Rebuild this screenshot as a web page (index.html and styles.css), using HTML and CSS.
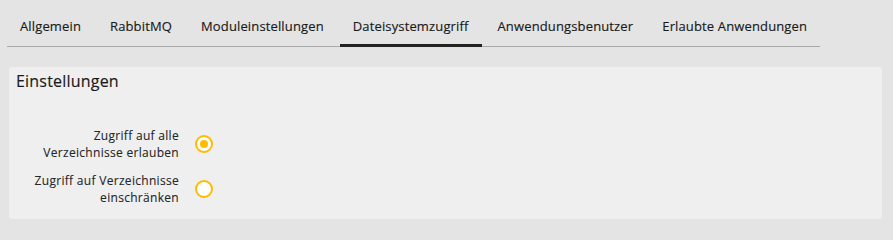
FILE: index.html
```html
<!DOCTYPE html>
<html lang="de">
<head>
<meta charset="utf-8">
<title>Einstellungen</title>
<link rel="stylesheet" href="styles.css">
</head>
<body>
<nav class="tabs">
  <a class="tab">Allgemein</a>
  <a class="tab">RabbitMQ</a>
  <a class="tab">Moduleinstellungen</a>
  <a class="tab active">Dateisystemzugriff</a>
  <a class="tab">Anwendungsbenutzer</a>
  <a class="tab">Erlaubte Anwendungen</a>
</nav>
<section class="panel">
  <h2 class="panel-title">Einstellungen</h2>
  <div class="form">
    <label class="row">
      <span class="label">Zugriff auf alle Verzeichnisse erlauben</span>
      <span class="radio checked"></span>
    </label>
    <label class="row">
      <span class="label">Zugriff auf Verzeichnisse einschränken</span>
      <span class="radio"></span>
    </label>
  </div>
</section>
</body>
</html>
```
FILE: styles.css
```css
html, body {
  margin: 0;
  padding: 0;
  background: #e4e4e4;
  font-family: "Open Sans", "Noto Sans", sans-serif;
  color: #1a1a1a;
}
.tabs {
  display: flex;
  width: max-content;
  gap: 3px;
  margin-left: 7px;
  box-shadow: inset 0 -1px 0 #a9a9a9;
}
.tab {
  font-size: 13px;
  letter-spacing: 0.14px;
  line-height: 18px;
  padding: 17px 13px 9px;
  border-bottom: 3px solid transparent;
  color: #1a1a1a;
  -webkit-text-stroke: 0.15px #1a1a1a;
  cursor: pointer;
}
.tab.active {
  border-bottom-color: #222;
}
.panel {
  margin: 20px 11px 0 9px;
  height: 152px;
  box-sizing: border-box;
  background: #efefef;
  border-radius: 3px;
  padding: 3px 7px 0;
}
.panel-title {
  margin: 0;
  font-size: 16px;
  letter-spacing: 0.2px;
  line-height: 22px;
  font-weight: 400;
  color: #1a1a1a;
  -webkit-text-stroke: 0.15px #1a1a1a;
}
.form {
  margin-top: 35px;
  display: flex;
  flex-direction: column;
  gap: 11px;
}
.row {
  display: flex;
  align-items: center;
  gap: 16px;
}
.label {
  width: 145px;
  margin-left: 18px;
  text-align: right;
  font-size: 12px;
  letter-spacing: 0.3px;
  line-height: 17px;
  color: #262626;
  -webkit-text-stroke: 0.1px #262626;
}
.radio {
  width: 18px;
  height: 18px;
  box-sizing: border-box;
  border: 2px solid #ffbb00;
  border-radius: 50%;
  background: #fff;
  display: flex;
  align-items: center;
  justify-content: center;
}
.radio.checked::after {
  content: "";
  width: 8px;
  height: 8px;
  border-radius: 50%;
  background: #ffbb00;
}
```
